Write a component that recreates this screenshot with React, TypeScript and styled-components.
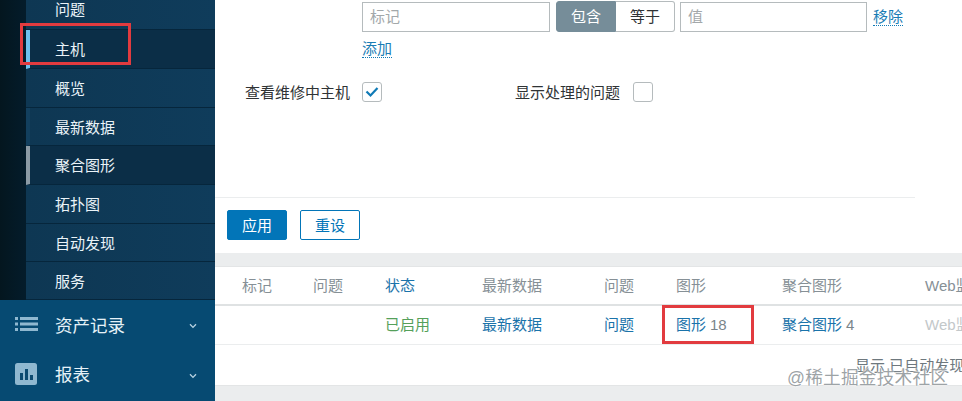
import React from "react";
import styled, { createGlobalStyle } from "styled-components";

const Global = createGlobalStyle`
  html, body { margin: 0; padding: 0; background: #fff; }
  body { font-family: "Liberation Sans", "Noto Sans CJK SC", sans-serif; font-size: 15px; }
  * { box-sizing: border-box; }
`;

const Page = styled.div`
  position: relative;
  display: flex;
  width: 962px;
  height: 401px;
  overflow: hidden;
`;

const Sidebar = styled.aside`
  width: 215px;
  flex: none;
  display: flex;
  flex-direction: column;
  background: #064a72;
`;

const SubArea = styled.div`
  display: flex;
  height: 300px;
`;

const Rail = styled.div`
  width: 26px;
  background: linear-gradient(90deg, #04161f, #041c2b);
`;

const SubMenu = styled.ul`
  flex: 1;
  margin: 0;
  padding: 0;
  list-style: none;
  display: flex;
  flex-direction: column;
  background: #0d3653;
`;

const SubItem = styled.li<{ $h: number; $bar?: string; $dark?: boolean; $pb: number }>`
  height: ${(p) => p.$h}px;
  display: flex;
  align-items: center;
  padding-left: ${(p) => (p.$bar ? 25 : 29)}px;
  padding-bottom: ${(p) => p.$pb}px;
  border-left: ${(p) => (p.$bar ? `4px solid ${p.$bar}` : "none")};
  border-bottom: 1px solid #06263c;
  color: #eaf3f8;
  background: ${(p) => (p.$dark ? "#0b2e47" : "linear-gradient(90deg, #0e3753, #0f3c5b)")};
`;

const MainItem = styled.div<{ $h: number; $pb: number }>`
  height: ${(p) => p.$h}px;
  display: flex;
  align-items: center;
  color: #e6f2f8;
  font-size: 17.5px;
  padding-bottom: ${(p) => p.$pb}px;
`;

const MainIcon = styled.span`
  width: 55px;
  display: flex;
  justify-content: flex-start;
  padding-left: 15px;
  flex: none;
`;

const MainLabel = styled.span`
  flex: 1;
`;

const Chevron = styled.span`
  width: 30px;
  flex: none;
  display: flex;
  padding-top: 4px;
`;

const Content = styled.main`
  flex: 1;
  min-width: 0;
  display: flex;
  flex-direction: column;
  background: #ebedee;
`;

const Filter = styled.section`
  height: 253px;
  background: #fff;
  display: flex;
  flex-direction: column;
  padding-top: 1px;
`;

const FormRow = styled.div<{ $mt?: number }>`
  display: flex;
  align-items: center;
  margin-top: ${(p) => p.$mt ?? 0}px;
  padding-left: 147px;
  color: #2f3335;
`;

const Input = styled.div<{ $w: number }>`
  width: ${(p) => p.$w}px;
  height: 30px;
  border: 1px solid #b5bbbd;
  color: #a3a8aa;
  padding: 0 0 2px 7px;
  display: flex;
  align-items: center;
`;

const Segment = styled.div`
  display: flex;
  margin: 0 5px 0 6px;
`;

const SegmentButton = styled.div<{ $active?: boolean }>`
  width: ${(p) => (p.$active ? 60 : 59)}px;
  height: 31px;
  padding-bottom: 3px;
  display: flex;
  align-items: center;
  justify-content: center;
  background: ${(p) => (p.$active ? "#768d99" : "#fff")};
  color: ${(p) => (p.$active ? "#fff" : "#2f3335")};
  border: 1px solid ${(p) => (p.$active ? "#768d99" : "#b5bbbd")};
  border-left-width: ${(p) => (p.$active ? 1 : 0)}px;
  border-radius: ${(p) => (p.$active ? "3px 0 0 3px" : "0 3px 3px 0")};
`;

const DotLink = styled.span<{ $ml?: number }>`
  color: #1a7db5;
  line-height: 17px;
  margin-left: ${(p) => p.$ml ?? 0}px;
  border-bottom: 1px dotted #0f7ab6;
`;

const CheckRow = styled.div`
  display: flex;
  align-items: center;
  margin-top: 23px;
  padding-left: 30px;
  color: #2f3335;
`;

const CheckLabel = styled.span<{ $ml?: number }>`
  margin-left: ${(p) => p.$ml ?? 0}px;
  white-space: nowrap;
`;

const Check = styled.span<{ $ml: number }>`
  width: 20px;
  height: 20px;
  margin-left: ${(p) => p.$ml}px;
  border: 1px solid #b5bbbd;
  border-radius: 3px;
  display: flex;
  align-items: center;
  justify-content: center;
  flex: none;
`;

const Actions = styled.div`
  margin-top: auto;
  width: 700px;
  height: 56px;
  border-top: 1px solid #ebedee;
  padding: 12px 0 0 12px;
  display: flex;
  gap: 13px;
`;

const Button = styled.button<{ $primary?: boolean }>`
  width: 60px;
  height: 30px;
  padding: 0 0 2px;
  font: inherit;
  border-radius: 2px;
  border: 1px solid #0275b8;
  background: ${(p) => (p.$primary ? "#0275b8" : "#fff")};
  color: ${(p) => (p.$primary ? "#fff" : "#0275b8")};
`;

const TableCard = styled.section`
  margin-top: 13px;
  height: 120px;
  background: #fff;
  border-top: 1px solid #e3e5e6;
  border-bottom: 1px solid #e3e5e6;
  display: flex;
  flex-direction: column;
`;

const Row = styled.div<{ $head?: boolean }>`
  display: grid;
  grid-template-columns: 71px 72px 97px 122px 72px 106px 143px 1fr;
  padding: 0 0 3px 27px;
  align-items: center;
  height: 39px;
  flex: none;
  white-space: nowrap;
  border-bottom: ${(p) => (p.$head ? "2px solid #dfe2e3" : "1px solid #ebedee")};
  color: #869096;
`;

const Cell = styled.span<{ $tone?: "link" | "ok" | "muted" }>`
  color: ${(p) =>
    p.$tone === "link" ? "#1a73aa" : p.$tone === "ok" ? "#55a05a" : p.$tone === "muted" ? "#c3c8ca" : "inherit"};
`;

const Count = styled.span`
  color: #7a858b;
  margin-left: 4px;
`;

const Footer = styled.div`
  flex: 1;
  padding: 9px 0 0 640px;
  white-space: nowrap;
  color: #6e787e;
`;

const RedBox = styled.div<{ $x: number; $y: number; $w: number; $h: number }>`
  position: absolute;
  left: ${(p) => p.$x}px;
  top: ${(p) => p.$y}px;
  width: ${(p) => p.$w}px;
  height: ${(p) => p.$h}px;
  border: 3px solid #e23b3f;
`;

const Watermark = styled.div`
  position: absolute;
  left: 787px;
  top: 367px;
  font-size: 17.7px;
  line-height: 22px;
  letter-spacing: 0.2px;
  white-space: nowrap;
  color: rgba(140, 146, 150, 0.85);
  text-shadow: 0 0 2px #fff, 0 0 2px #fff;
`;

const subItems: { t: string; h: number; bar?: string; dark?: boolean; pb: number }[] = [
  { t: "问题", h: 30, pb: 13 },
  { t: "主机", h: 39, bar: "#6fc0ee", dark: true, pb: 2 },
  { t: "概览", h: 39, pb: 2 },
  { t: "最新数据", h: 38, bar: "#123f5e", pb: 1 },
  { t: "聚合图形", h: 39, bar: "#8b9aa5", dark: true, pb: 2 },
  { t: "拓扑图", h: 39, pb: 2 },
  { t: "自动发现", h: 38, pb: 1 },
  { t: "服务", h: 38, pb: 0 },
];

const ChevronIcon = () => (
  <svg width="8" height="6" viewBox="0 0 8 6" style={{ marginLeft: 4 }}>
    <path d="M1 1.2 4 4.4 7 1.2" fill="none" stroke="#b9d3e2" strokeWidth="1.3" />
  </svg>
);

const App = () => (
  <Page>
    <Global />
    <Sidebar>
      <SubArea>
        <Rail />
        <SubMenu>
          {subItems.map((s) => (
            <SubItem key={s.t} $h={s.h} $bar={s.bar} $dark={s.dark} $pb={s.pb}>
              {s.t}
            </SubItem>
          ))}
        </SubMenu>
      </SubArea>
      <MainItem $h={50} $pb={2}>
        <MainIcon>
          <svg width="23" height="16" viewBox="0 0 23 16">
            <g fill="#8fb8d0">
              <rect x="0" y="1" width="3" height="3" />
              <rect x="0" y="6.5" width="3" height="3" />
              <rect x="0" y="12" width="3" height="3" />
              <rect x="5" y="1" width="18" height="3" />
              <rect x="5" y="6.5" width="18" height="3" />
              <rect x="5" y="12" width="18" height="3" />
            </g>
          </svg>
        </MainIcon>
        <MainLabel>资产记录</MainLabel>
        <Chevron>
          <ChevronIcon />
        </Chevron>
      </MainItem>
      <MainItem $h={49} $pb={2}>
        <MainIcon>
          <svg width="22" height="22" viewBox="0 0 22 22">
            <rect width="22" height="22" rx="2.5" fill="#8fb8d0" />
            <g fill="#0b4a70">
              <rect x="5" y="10" width="3" height="7" />
              <rect x="10" y="6" width="3" height="11" />
              <rect x="15" y="12" width="3" height="5" />
            </g>
          </svg>
        </MainIcon>
        <MainLabel>报表</MainLabel>
        <Chevron>
          <ChevronIcon />
        </Chevron>
      </MainItem>
    </Sidebar>
    <Content>
      <Filter>
        <FormRow>
          <Input $w={188}>标记</Input>
          <Segment>
            <SegmentButton $active>包含</SegmentButton>
            <SegmentButton>等于</SegmentButton>
          </Segment>
          <Input $w={187}>值</Input>
          <DotLink $ml={6}>移除</DotLink>
        </FormRow>
        <FormRow $mt={8}>
          <DotLink>添加</DotLink>
        </FormRow>
        <CheckRow>
          <CheckLabel>查看维修中主机</CheckLabel>
          <Check $ml={12}>
            <svg width="14" height="12" viewBox="0 0 14 12">
              <path d="M1.5 5.5 5.5 9.5 12.5 2" fill="none" stroke="#0f7ab6" strokeWidth="2.2" />
            </svg>
          </Check>
          <CheckLabel $ml={133}>显示处理的问题</CheckLabel>
          <Check $ml={13} />
        </CheckRow>
        <Actions>
          <Button $primary>应用</Button>
          <Button>重设</Button>
        </Actions>
      </Filter>
      <TableCard>
        <Row $head>
          <Cell>标记</Cell>
          <Cell>问题</Cell>
          <Cell $tone="link">状态</Cell>
          <Cell>最新数据</Cell>
          <Cell>问题</Cell>
          <Cell>图形</Cell>
          <Cell>聚合图形</Cell>
          <Cell>Web监测</Cell>
        </Row>
        <Row>
          <Cell />
          <Cell />
          <Cell $tone="ok">已启用</Cell>
          <Cell $tone="link">最新数据</Cell>
          <Cell $tone="link">问题</Cell>
          <Cell>
            <Cell $tone="link">图形</Cell>
            <Count>18</Count>
          </Cell>
          <Cell>
            <Cell $tone="link">聚合图形</Cell>
            <Count>4</Count>
          </Cell>
          <Cell $tone="muted">Web监测</Cell>
        </Row>
        <Footer>显示 已自动发现的 1 中的 1</Footer>
      </TableCard>
    </Content>
    <RedBox $x={20} $y={23} $w={111} $h={42} />
    <RedBox $x={662} $y={305} $w={92} $h={39} />
    <Watermark>@稀土掘金技术社区</Watermark>
  </Page>
);

export default App;
